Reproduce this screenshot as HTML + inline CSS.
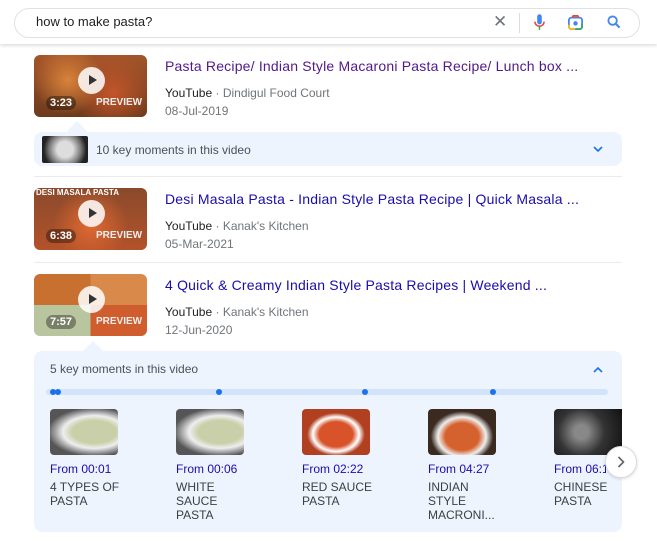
<!DOCTYPE html>
<html><head><meta charset="utf-8"><style>
*{margin:0;padding:0;box-sizing:border-box}
body{width:657px;height:541px;background:#fff;font-family:"Liberation Sans",Arial,sans-serif;position:relative;overflow:hidden}
.a{position:absolute}
.hdr{left:0;top:0;width:657px;height:44px;background:#fff;box-shadow:0 2px 3px rgba(0,0,0,.12)}
.sb{left:14px;top:8px;width:626px;height:30px;border:1px solid #dfe1e5;border-radius:15px}
.q{left:36px;top:14px;font-size:13px;color:#202124}
.th{border-radius:6px;overflow:hidden;width:113px;height:62px;left:34px}
.food{width:100%;height:100%;background:radial-gradient(circle at 30% 40%,#d9833a,transparent 40%),radial-gradient(circle at 70% 60%,#c2552a,transparent 45%),linear-gradient(#a4552a,#6d3a1c)}
.play{left:44px;top:12px;width:27px;height:27px;border-radius:50%;background:rgba(255,255,255,.85)}
.play:after{content:"";position:absolute;left:11px;top:8px;border-left:8px solid #333;border-top:5.5px solid transparent;border-bottom:5.5px solid transparent}
.dur{left:12px;top:41px;color:#fff;font-size:11px;font-weight:bold;background:rgba(0,0,0,.35);border-radius:8px;padding:1px 4px}
.prev{left:62px;top:42px;color:#eee;font-size:10px;font-weight:bold}
.t{left:165px;font-size:14px;color:#1a0dab;white-space:nowrap;letter-spacing:0.2px}
.s{left:165px;font-size:12px;color:#70757a}
.s b{font-weight:normal;color:#202124}
.km{background:#eef4fd;border-radius:8px;left:34px;width:588px}
.sep{left:34px;width:588px;height:1px;background:#ebebeb}
.thumb{width:68px;height:46px;border-radius:4px;top:409px}
.fr{font-size:12px;color:#1a0dab;top:462px}
.lb{font-size:12px;color:#3c4043;top:480px;line-height:14px;width:80px}
.dot{width:6px;height:6px;border-radius:50%;background:#1a73e8;top:389px}
</style></head><body>
<div class="a hdr"></div>
<div class="a sb"></div>
<div class="a q">how to make pasta?</div>
<div class="a" style="left:493px;top:13px;font-size:17px;color:#70757a;line-height:18px">✕</div>
<div class="a" style="left:519px;top:13px;width:1px;height:20px;background:#dadce0"></div>
<svg class="a" style="left:534px;top:14px" width="11" height="18" viewBox="0 0 12 19"><rect x="3.5" y="0" width="5" height="11" rx="2.5" fill="#4285f4"/><path d="M1 8a5 5 0 0 0 10 0" stroke="#ea4335" stroke-width="1.7" fill="none"/><rect x="5.2" y="13" width="1.6" height="4" fill="#34a853"/></svg>
<svg class="a" style="left:568px;top:15px" width="15" height="15" viewBox="0 0 17 17"><rect x="1" y="3" width="15" height="13" rx="3" stroke="#4285f4" stroke-width="2" fill="none"/><path d="M1 11v2a3 3 0 0 0 3 3h4" stroke="#fbbc04" stroke-width="2" fill="none"/><path d="M16 10v3a3 3 0 0 1-3 3h-4" stroke="#34a853" stroke-width="2" fill="none"/><path d="M5 3l1-2h5l1 2" stroke="#ea4335" stroke-width="2" fill="none"/><circle cx="8.5" cy="9.5" r="2.5" fill="#4285f4"/></svg>
<svg class="a" style="left:607px;top:15px" width="14" height="14" viewBox="0 0 15 15"><circle cx="6" cy="6" r="4.5" stroke="#4285f4" stroke-width="2" fill="none"/><path d="M9.5 9.5l4 4" stroke="#4285f4" stroke-width="2.2"/></svg>

<div class="a th" style="top:55px"><div class="food"></div><div class="a play"></div><div class="a dur">3:23</div><div class="a prev">PREVIEW</div></div>
<div class="a t" style="top:58px;color:#52188c">Pasta Recipe/ Indian Style Macaroni Pasta Recipe/ Lunch box ...</div>
<div class="a s" style="top:86px"><b>YouTube</b> · Dindigul Food Court</div>
<div class="a s" style="top:104px">08-Jul-2019</div>
<div class="a" style="left:70px;top:124px;width:14px;height:14px;background:#eef4fd;transform:rotate(45deg)"></div>
<div class="a km" style="top:132px;height:34px"></div>
<div class="a" style="left:42px;top:136px;width:46px;height:27px;background:radial-gradient(circle,#ddd 30%,#777 60%,#222 80%);border-radius:2px"></div>
<div class="a" style="left:96px;top:143px;font-size:12px;color:#4d5156">10 key moments in this video</div>
<svg class="a" style="left:593px;top:146px" width="10" height="7"><path d="M1 1l4 4 4-4" stroke="#1a73e8" stroke-width="1.6" fill="none"/></svg>
<div class="a sep" style="top:176px"></div>

<div class="a th" style="top:188px"><div class="food" style="background:radial-gradient(circle at 50% 60%,#e06a32,transparent 55%),linear-gradient(#8a4a2c,#b3522a)"></div><div class="a" style="left:2px;top:0;color:#fff;font-size:8px;font-weight:bold">DESI MASALA PASTA</div><div class="a play"></div><div class="a dur">6:38</div><div class="a prev">PREVIEW</div></div>
<div class="a t" style="top:191px">Desi Masala Pasta - Indian Style Pasta Recipe | Quick Masala ...</div>
<div class="a s" style="top:219px"><b>YouTube</b> · Kanak's Kitchen</div>
<div class="a s" style="top:237px">05-Mar-2021</div>
<div class="a sep" style="top:262px"></div>

<div class="a th" style="top:274px"><div class="food" style="background:linear-gradient(90deg,#c8702f 50%,#d98a4a 50%) top/100% 50% no-repeat,linear-gradient(90deg,#b9c59e 50%,#cf5d2e 50%) bottom/100% 50% no-repeat"></div><div class="a play"></div><div class="a dur">7:57</div><div class="a prev">PREVIEW</div></div>
<div class="a t" style="top:277px">4 Quick &amp; Creamy Indian Style Pasta Recipes | Weekend ...</div>
<div class="a s" style="top:305px"><b>YouTube</b> · Kanak's Kitchen</div>
<div class="a s" style="top:323px">12-Jun-2020</div>
<div class="a" style="left:86px;top:344px;width:14px;height:14px;background:#eef4fd;transform:rotate(45deg)"></div>
<div class="a km" style="top:351px;height:181px"></div>
<div class="a" style="left:50px;top:362px;font-size:12px;color:#4d5156">5 key moments in this video</div>
<svg class="a" style="left:593px;top:366px" width="10" height="7"><path d="M1 6l4-4 4 4" stroke="#1a73e8" stroke-width="1.6" fill="none"/></svg>
<div class="a" style="left:46px;top:389px;width:562px;height:6px;border-radius:3px;background:#d2e3fc"></div>
<div class="a dot" style="left:50px"></div><div class="a dot" style="left:55px"></div>
<div class="a dot" style="left:216px"></div><div class="a dot" style="left:362px"></div><div class="a dot" style="left:490px"></div>

<div class="a thumb" style="left:50px;background:radial-gradient(ellipse at 65% 50%,#c9cfa8 35%,#eee 50%,#555 75%)"></div>
<div class="a thumb" style="left:176px;background:radial-gradient(ellipse at 65% 50%,#c9cfa8 35%,#eee 50%,#555 75%)"></div>
<div class="a thumb" style="left:302px;background:radial-gradient(ellipse at 50% 55%,#d9532a 35%,#fff 48%,#b04020 60%)"></div>
<div class="a thumb" style="left:428px;background:radial-gradient(ellipse at 50% 60%,#d5622e 35%,#eee 50%,#3a2a20 65%)"></div>
<div class="a thumb" style="left:554px;width:68px;border-radius:4px 0 0 4px;background:radial-gradient(circle at 40% 50%,#888 15%,#333 50%,#111)"></div>
<div class="a fr" style="left:50px">From 00:01</div>
<div class="a fr" style="left:176px">From 00:06</div>
<div class="a fr" style="left:302px">From 02:22</div>
<div class="a fr" style="left:428px">From 04:27</div>
<div class="a fr" style="left:554px;width:52px;overflow:hidden;white-space:nowrap">From 06:10</div>
<div class="a lb" style="left:50px">4 TYPES OF<br>PASTA</div>
<div class="a lb" style="left:176px">WHITE<br>SAUCE<br>PASTA</div>
<div class="a lb" style="left:302px">RED SAUCE<br>PASTA</div>
<div class="a lb" style="left:428px">INDIAN<br>STYLE<br>MACRONI...</div>
<div class="a lb" style="left:554px">CHINESE<br>PASTA</div>
<div class="a" style="left:605px;top:446px;width:32px;height:32px;border-radius:50%;background:#fff;border:1px solid #dadce0;box-shadow:0 1px 3px rgba(0,0,0,.15)"></div>
<svg class="a" style="left:617px;top:456px" width="8" height="12"><path d="M1.5 1l5 5-5 5" stroke="#5f6368" stroke-width="1.6" fill="none"/></svg>
</body></html>
